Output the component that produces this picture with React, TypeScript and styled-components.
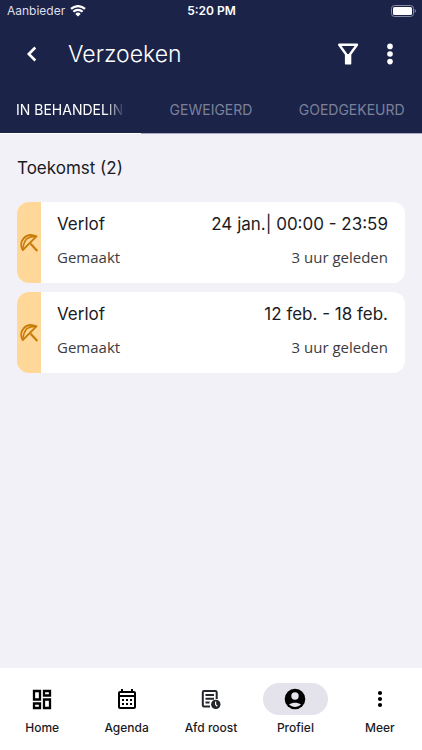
import React from "react";
import styled, { createGlobalStyle, css } from "styled-components";

const GlobalStyle = createGlobalStyle`
  *, *::before, *::after { box-sizing: border-box; }
  body { margin: 0; background: #f2f1f7; font-family: Inter, "Liberation Sans", sans-serif; color: #1b1b1f; }
  button { font: inherit; color: inherit; background: none; border: 0; padding: 0; cursor: pointer; }
  h1, h2, h3, p { margin: 0; font-size: inherit; font-weight: 400; }
  svg { display: block; flex: none; }
`;

const Screen = styled.div`
  min-height: 100vh;
  display: flex;
  flex-direction: column;
`;

const Header = styled.header`
  background: #1b2349;
  color: #fff;
`;

const StatusBar = styled.div`
  display: grid;
  grid-template-columns: 1fr auto 1fr;
  align-items: center;
  height: 22px;
  padding: 0 6px 0 7px;
  font-size: 12px;
  line-height: 16px;
`;

const Carrier = styled.span`
  display: flex;
  align-items: center;
  gap: 5px;
  color: #dddfe9;
`;

const Clock = styled.span`
  font-weight: 600;
`;

const BatterySlot = styled.span`
  justify-self: end;
`;

const TitleBar = styled.div`
  display: flex;
  align-items: center;
  gap: 2px;
  height: 64px;
  padding: 0 12px;
`;

const IconButton = styled.button`
  display: grid;
  place-items: center;
  width: 40px;
  height: 40px;
`;

const Title = styled.h1`
  flex: 1;
  margin-left: 14px;
  font-size: 23px;
  line-height: 32px;
  font-weight: 300;
`;

const Tabs = styled.div`
  display: flex;
  height: 48px;
`;

const Tab = styled.button<{ $active?: boolean }>`
  flex: 1 1 0;
  min-width: 0;
  padding: 0 16px;
  font-size: 14px;
  line-height: 20px;
  white-space: nowrap;
  color: ${(p) => (p.$active ? "#fff" : "#7c819a")};
  border-bottom: 1px solid ${(p) => (p.$active ? "#fff" : "#a9acbf")};
`;

const TabLabel = styled.span<{ $fade?: boolean }>`
  display: block;
  ${(p) =>
    p.$fade &&
    css`
      overflow: hidden;
      mask-image: linear-gradient(to right, #000 calc(100% - 20px), transparent);
    `}
`;

const Content = styled.main`
  flex: 1;
  padding: 22px 17px;
`;

const SectionTitle = styled.h2`
  font-size: 17px;
  line-height: 24px;
  margin-bottom: 22px;
`;

const CardList = styled.div`
  display: flex;
  flex-direction: column;
  gap: 9px;
`;

const Card = styled.article`
  display: flex;
  min-height: 81px;
  border-radius: 12px;
  background: #fff;
  overflow: hidden;
`;

const CardStripe = styled.div`
  display: grid;
  place-items: center;
  width: 24px;
  background: #ffd798;
  color: #c87c0a;
`;

const CardBody = styled.div`
  flex: 1;
  display: flex;
  flex-direction: column;
  gap: 9px;
  padding: 10px 17px 10px 16px;
`;

const CardRow = styled.div<{ $muted?: boolean }>`
  display: flex;
  justify-content: space-between;
  line-height: 24px;
  font-size: ${(p) => (p.$muted ? "15px" : "17px")};
  color: ${(p) => (p.$muted ? "#3c3c40" : "#1b1b1f")};
  ${(p) =>
    p.$muted &&
    css`
      font-family: "Open Sans", "Noto Sans", sans-serif;
    `}
`;

const BottomNav = styled.nav`
  display: flex;
  background: #fff;
  padding: 15px 0 13px;
`;

const NavItem = styled.button`
  flex: 1 1 0;
  display: flex;
  flex-direction: column;
  align-items: center;
  gap: 4px;
  font-size: 12px;
  font-weight: 500;
  line-height: 18px;
`;

const NavIcon = styled.span<{ $active?: boolean }>`
  display: grid;
  place-items: center;
  width: 65px;
  height: 32px;
  border-radius: 16px;
  color: #000;
  background: ${(p) => (p.$active ? "#e4e3eb" : "transparent")};
`;

const WifiIcon = () => (
  <svg width="16" height="12" viewBox="0 0 16 12" fill="#fff" aria-hidden="true">
    <path d="M8 11.6 10.7 8.9A3.8 3.8 0 0 0 5.3 8.9Z" />
    <path d="M3.4 6.8a6.5 6.5 0 0 1 9.200 0" fill="none" stroke="#fff" strokeWidth="2.2" />
    <path d="M1 3.9a10.1 10.1 0 0 1 14 0" fill="none" stroke="#fff" strokeWidth="2.2" />
  </svg>
);

const BatteryIcon = () => (
  <svg width="25" height="12" viewBox="0 0 25 12" aria-label="Batterij vol">
    <rect x="0.5" y="0.5" width="22" height="11" rx="3" fill="none" stroke="#868ba2" />
    <rect x="2" y="2" width="19" height="8" rx="1.6" fill="#fff" />
    <path d="M23.6 4a2.2 2.2 0 0 1 0 4z" fill="#868ba2" />
  </svg>
);

const BackIcon = () => (
  <svg width="24" height="24" viewBox="0 0 24 24" fill="none" stroke="#fff" strokeWidth="2.6" aria-hidden="true">
    <path d="M15.3 5.5 8.8 12l6.5 6.5" />
  </svg>
);

const FilterIcon = () => (
  <svg width="24" height="24" viewBox="0 0 24 24" aria-hidden="true">
    <path
      d="M3.2 2.7H21L14.1 12.2V21.4H10.1V12.2Z"
      fill="none"
      stroke="#fff"
      strokeWidth="2.4"
      strokeLinejoin="round"
    />
    <path d="M9.9 12h4.4v9.8H9.9z" fill="#fff" />
  </svg>
);

const DotsIcon = ({ r, gap }: { r: number; gap: number }) => (
  <svg width="24" height="24" viewBox="0 0 24 24" fill="currentColor" aria-hidden="true">
    <circle cx="12" cy={12 - gap} r={r} />
    <circle cx="12" cy="12" r={r} />
    <circle cx="12" cy={12 + gap} r={r} />
  </svg>
);

const UmbrellaIcon = () => (
  <svg
    width="20"
    height="20"
    viewBox="0 0 20 20"
    fill="none"
    stroke="currentColor"
    strokeWidth="1.9"
    strokeLinejoin="round"
    aria-hidden="true"
  >
    <path d="M3.8 17C-1.2 9 6.5-1.6 17.4 3.4Z" />
    <path d="M3.8 17C4 12 5.500 8.500 8 5.600C11 3.600 14 3.300 17.400 3.400" strokeWidth="1.6" />
    <path d="M11.600 10.800 18.300 18" strokeWidth="2.2" />
  </svg>
);

const HomeIcon = () => (
  <svg width="24" height="24" viewBox="0 0 24 24" fill="none" stroke="currentColor" strokeWidth="2.300" aria-hidden="true">
    <path d="M4 4h6v8.500H4zM14 4h6v4.500h-6zM14 12.500h6V21h-6zM4 16.500h6V21H4z" />
  </svg>
);

const AgendaIcon = () => (
  <svg width="24" height="24" viewBox="0 -1 24 24" fill="currentColor" aria-hidden="true">
    <path d="M7 11H9V13H7V11M21 5V19C21 20.11 20.11 21 19 21H5C3.89 21 3 20.1 3 19V5C3 3.9 3.9 3 5 3H6V1H8V3H16V1H18V3H19C20.11 3 21 3.9 21 5M5 7H19V5H5V7M19 19V9H5V19H19M15 13V11H17V13H15M11 13V11H13V13H11M7 15H9V17H7V15M15 17V15H17V17H15M11 17V15H13V17H11Z" />
  </svg>
);

const RosterIcon = () => (
  <svg width="24" height="24" viewBox="1 -1 24 24" fill="none" stroke="#23262b" strokeWidth="2" aria-hidden="true">
    <path d="M12 18.500H6A1.200 1.200 0 0 1 4.800 17.300V4.200A1.200 1.200 0 0 1 6 3H17.500A1.200 1.200 0 0 1 18.700 4.200V11" />
    <path d="M7.500 7h8.500M7.500 10.800h8.500M7.500 14.600h4" />
    <circle cx="17.800" cy="16.400" r="4.700" fill="#23262b" stroke="none" />
    <path d="M17.600 13.600V16.600L19.300 18.200" stroke="#fff" strokeWidth="1.2" />
  </svg>
);

const ProfileIcon = () => (
  <svg width="24" height="24" viewBox="0 0 24 24" aria-hidden="true">
    <circle cx="12" cy="12" r="10.300" fill="currentColor" />
    <circle cx="12" cy="9" r="3.700" fill="#e4e3eb" />
    <path d="M6 17.600C9.500 15.200 14.500 15.200 18 17.600C14.500 20.800 9.500 20.800 6 17.600Z" fill="#e4e3eb" />
  </svg>
);

const requests = [
  { kind: "Verlof", period: "24 jan.| 00:00 - 23:59", status: "Gemaakt", age: "3 uur geleden" },
  { kind: "Verlof", period: "12 feb. - 18 feb.", status: "Gemaakt", age: "3 uur geleden" },
];

const navItems = [
  { label: "Home", icon: <HomeIcon /> },
  { label: "Agenda", icon: <AgendaIcon /> },
  { label: "Afd roost", icon: <RosterIcon /> },
  { label: "Profiel", icon: <ProfileIcon />, active: true },
  { label: "Meer", icon: <DotsIcon r={2.1} gap={6} /> },
];

export default function App() {
  return (
    <Screen>
      <GlobalStyle />
      <Header>
        <StatusBar>
          <Carrier>
            Aanbieder
            <WifiIcon />
          </Carrier>
          <Clock>5:20 PM</Clock>
          <BatterySlot>
            <BatteryIcon />
          </BatterySlot>
        </StatusBar>
        <TitleBar>
          <IconButton aria-label="Terug">
            <BackIcon />
          </IconButton>
          <Title>Verzoeken</Title>
          <IconButton aria-label="Filter">
            <FilterIcon />
          </IconButton>
          <IconButton aria-label="Meer opties">
            <DotsIcon r={2.8} gap={7.6} />
          </IconButton>
        </TitleBar>
        <Tabs role="tablist">
          <Tab role="tab" aria-selected="true" $active>
            <TabLabel $fade>IN BEHANDELING</TabLabel>
          </Tab>
          <Tab role="tab" aria-selected="false">
            <TabLabel>GEWEIGERD</TabLabel>
          </Tab>
          <Tab role="tab" aria-selected="false">
            <TabLabel>GOEDGEKEURD</TabLabel>
          </Tab>
        </Tabs>
      </Header>
      <Content>
        <SectionTitle>Toekomst (2)</SectionTitle>
        <CardList>
          {requests.map((r) => (
            <Card key={r.period}>
              <CardStripe>
                <UmbrellaIcon />
              </CardStripe>
              <CardBody>
                <CardRow>
                  <h3>{r.kind}</h3>
                  <span>{r.period}</span>
                </CardRow>
                <CardRow $muted>
                  <span>{r.status}</span>
                  <span>{r.age}</span>
                </CardRow>
              </CardBody>
            </Card>
          ))}
        </CardList>
      </Content>
      <BottomNav>
        {navItems.map((item) => (
          <NavItem key={item.label} aria-current={item.active ? "page" : undefined}>
            <NavIcon $active={item.active}>{item.icon}</NavIcon>
            {item.label}
          </NavItem>
        ))}
      </BottomNav>
    </Screen>
  );
}
